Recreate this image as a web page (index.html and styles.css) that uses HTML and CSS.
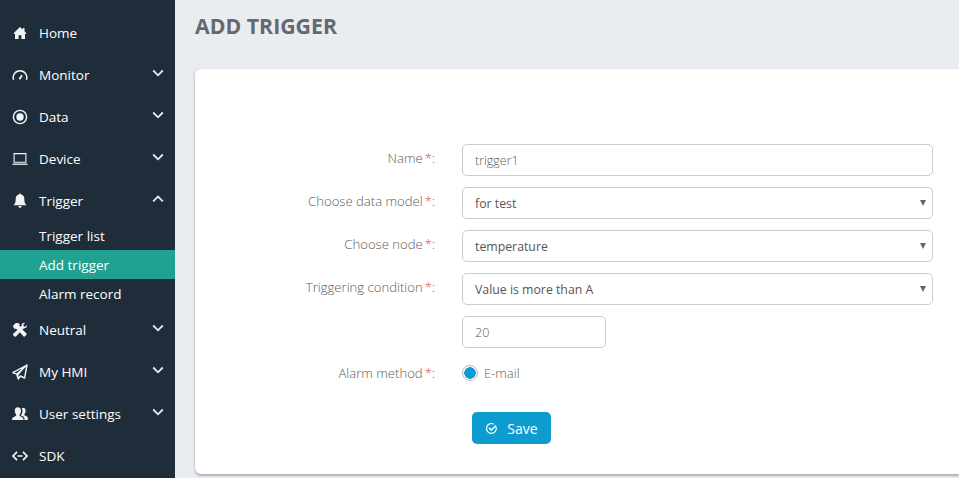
FILE: index.html
```html
<!DOCTYPE html>
<html lang="en">

<head>
  <meta charset="UTF-8">
  <meta name="viewport" content="width=device-width, initial-scale=1.0">
  <title>Add trigger</title>
  <link rel="stylesheet" href="styles.css">
</head>

<body>

  <aside class="sidebar">
    <a class="menu-item" href="#">
      <svg class="menu-icon" viewBox="0 0 16 16"><path fill="currentColor" d="M8 2 1.500 8.200l.8.8.7-.6V14h3.600v-3.800h2.800V14H13V8.400l.7.6.8-.8-2-1.900V3h-1.800v1.600z"/></svg>
      <span>Home</span>
    </a>
    <a class="menu-item" href="#">
      <svg class="menu-icon" viewBox="0 0 16 16"><path fill="none" stroke="currentColor" stroke-width="1.500" d="M1.600 12.800A6.800 6.800 0 1 1 14.400 12.800"/><path fill="none" stroke="currentColor" stroke-width="1.800" d="m7.400 12.300 2.600-4"/></svg>
      <span>Monitor</span>
      <svg class="chevron" viewBox="0 0 12 8"><path d="m1.200 1.500 4.800 4.800 4.800-4.800"/></svg>
    </a>
    <a class="menu-item" href="#">
      <svg class="menu-icon" viewBox="0 0 16 16"><circle cx="8" cy="8" r="6.600" fill="none" stroke="currentColor" stroke-width="1.400"/><circle cx="8" cy="8" r="3.700" fill="currentColor"/></svg>
      <span>Data</span>
      <svg class="chevron" viewBox="0 0 12 8"><path d="m1.200 1.500 4.800 4.800 4.800-4.800"/></svg>
    </a>
    <a class="menu-item" href="#">
      <svg class="menu-icon" viewBox="0 0 16 16"><path fill="none" stroke="currentColor" stroke-width="1.100" d="M2.100 2.600h11.800v8.600H2.100z"/><path fill="none" stroke="currentColor" stroke-width="1.300" d="M.5 13.200h15"/></svg>
      <span>Device</span>
      <svg class="chevron" viewBox="0 0 12 8"><path d="m1.200 1.500 4.800 4.800 4.800-4.800"/></svg>
    </a>
    <a class="menu-item" href="#">
      <svg class="menu-icon" viewBox="0 0 16 16"><path fill="currentColor" d="M8 .5c.6 0 1 .4 1 1 2.300.5 3.300 2.200 3.300 4.300 0 3.200.6 5 2.200 6.400H1.500c1.600-1.400 2.200-3.200 2.200-6.400C3.700 3.700 4.700 2 7 1.500c0-.6.400-1 1-1zM6.400 13h3.200c0 1-.7 1.800-1.600 1.800S6.400 14 6.400 13z"/></svg>
      <span>Trigger</span>
      <svg class="chevron" viewBox="0 0 12 8"><path d="m1.200 6.300 4.800-4.800 4.800 4.800"/></svg>
    </a>
    <div class="submenu">
      <a class="submenu-item" href="#">Trigger list</a>
      <a class="submenu-item active" href="#">Add trigger</a>
      <a class="submenu-item" href="#">Alarm record</a>
    </div>
    <a class="menu-item" href="#">
      <svg class="menu-icon" viewBox="0 0 16 16"><path fill="currentColor" d="M.8 4.200 3.200 1.400c1.600-.6 3.400-.4 4.700.8l-.8 1 1.500 1.500 1-1c-.2-1.500.9-2.900 2.700-2.900l.7.100-1.700 1.900.4 1.500 1.500.4 1.800-1.700c.3 2-1.200 3.600-3 3.200L10.500 7.500l4 4.100c.5.600 0 1.200-.9 2.100-.9.900-1.500 1.300-2 .8L7.800 10.300l-3.500 3.900c-.6.700-1.500.5-2.400-.3-.9-.9-1.100-1.800-.5-2.400L5.400 8 3.800 6.400 2.800 7.200z"/></svg>
      <span>Neutral</span>
      <svg class="chevron" viewBox="0 0 12 8"><path d="m1.200 1.500 4.800 4.800 4.800-4.800"/></svg>
    </a>
    <a class="menu-item" href="#">
      <svg class="menu-icon" viewBox="0 0 16 16"><path fill="none" stroke="currentColor" stroke-width="1.400" stroke-linejoin="round" d="M15 1 .8 8.600l3.900 1.600zM15 1l-2.400 13-4.200-2-2.100 3-1.600-4.800"/><path fill="currentColor" d="M13.800 2 4.900 10.200l1.400 4.600.3-3.800z"/></svg>
      <span>My HMI</span>
      <svg class="chevron" viewBox="0 0 12 8"><path d="m1.200 1.500 4.800 4.800 4.800-4.800"/></svg>
    </a>
    <a class="menu-item" href="#">
      <svg class="menu-icon" viewBox="0 0 16 16"><path fill="currentColor" d="M5.800 1.200c2 0 3.200 1.500 3.200 3.500S8 8.300 7.500 8.800c0 .9.300 1.200 1.300 1.600 1.300.5 2.600 1.100 2.600 2.200V14H.2v-1.400c0-1.100 1.300-1.700 2.600-2.200 1-.4 1.500-.7 1.500-1.600-.4-.5-1.500-2.100-1.500-4.100s1-3.500 3-3.500zM11 1.800c1.700 0 2.600 1.300 2.600 3s-.9 3.200-1.300 3.600c0 .8.300 1 1.100 1.300 1.100.5 2.400 1 2.400 2V14h-3.400v-1.800c0-1.100-1.100-1.800-2.800-2.500-.4-.2-.6-.4-.6-.8.700-.8 1.500-2.200 1.500-3.700 0-1-.2-2-.7-2.900.5-.3 1-.5 1.600-.5z"/></svg>
      <span>User settings</span>
      <svg class="chevron" viewBox="0 0 12 8"><path d="m1.200 1.500 4.800 4.800 4.800-4.800"/></svg>
    </a>
    <a class="menu-item" href="#">
      <svg class="menu-icon" viewBox="0 0 16 16"><path fill="none" stroke="currentColor" stroke-width="1.800" d="M5 3.800.9 8 5 12.200M11 3.800 15.100 8 11 12.200"/><path fill="none" stroke="currentColor" stroke-width="1.500" d="M5.500 8h5"/></svg>
      <span>SDK</span>
    </a>
  </aside>

  <main class="main">
    <h1 class="page-title">ADD TRIGGER</h1>

    <form class="card">
      <label class="form-label">Name<em>*</em>:</label>
      <input class="form-input" type="text" value="trigger1">

      <label class="form-label">Choose data model<em>*</em>:</label>
      <div class="select-wrap">
        <select class="form-input form-select"><option>for test</option></select>
      </div>

      <label class="form-label">Choose node<em>*</em>:</label>
      <div class="select-wrap">
        <select class="form-input form-select"><option>temperature</option></select>
      </div>

      <label class="form-label">Triggering condition<em>*</em>:</label>
      <div class="select-wrap">
        <select class="form-input form-select"><option>Value is more than A</option></select>
      </div>

      <span></span>
      <input class="form-input input-small" type="text" value="20">

      <label class="form-label label-radio">Alarm method<em>*</em>:</label>
      <label class="radio-line">
        <input class="radio" type="radio" name="method" checked>
        <span>E-mail</span>
      </label>

      <span></span>
      <button class="save-btn" type="button">
        <svg class="save-icon" viewBox="0 0 14 14"><path fill="none" stroke="currentColor" stroke-width="1.300" d="M11.900 5.200A5.300 5.300 0 1 1 9.600 2.400"/><path fill="none" stroke="currentColor" stroke-width="1.500" d="m4.300 6.300 2.500 2.400 5.200-5"/></svg>
        Save
      </button>
    </form>
  </main>

</body>

</html>
```

FILE: styles.css
```css
html,
body {
  height: 100%;
}

body {
  margin: 0;
  display: flex;
  overflow: hidden;
  background: #e9ecf1;
  font-family: "Open Sans", sans-serif;
}

.sidebar {
  flex: 0 0 175px;
  padding-top: 12px;
  background: #1f2d3a;
  box-sizing: border-box;
}

.menu-item {
  display: flex;
  align-items: center;
  height: 42px;
  padding: 0 11px 0 12px;
  color: #fff;
  font-size: 13.5px;
  text-decoration: none;
}

.menu-item span {
  flex: 1;
  margin-left: 11px;
}

.menu-icon {
  width: 16px;
  height: 16px;
  flex: none;
  color: #f1f3f5;
}

.chevron {
  width: 12px;
  height: 8px;
  margin-top: -5px;
  fill: none;
  stroke: #e8ebee;
  stroke-width: 1.800;
}

.submenu {
  margin-top: -1px;
  padding-bottom: 1px;
}

.submenu-item {
  display: block;
  height: 29px;
  padding-left: 39px;
  color: #fff;
  font-size: 13.5px;
  line-height: 31px;
  text-decoration: none;
}

.submenu-item.active {
  background: #20a192;
}

.main {
  flex: 1;
  min-width: 0;
  padding-left: 20px;
}

.page-title {
  margin: 0;
  height: 69px;
  color: #65686d;
  font-size: 21.300px;
  font-weight: 700;
  line-height: 52px;
}

.card {
  display: grid;
  grid-template-columns: 240px 471px;
  grid-template-rows: repeat(5, 32px) 28px 46px;
  column-gap: 27px;
  row-gap: 11px;
  align-items: center;
  height: 405px;
  padding-top: 75px;
  box-sizing: border-box;
  background: #fff;
  border-radius: 6px 0 0 6px;
  box-shadow: 0 2px 2px #b0b2b5, -1px 0 2px #d6d9de;
}

.form-label {
  margin-top: -5px;
  color: #5c5c5c;
  font-size: 13.100px;
  font-weight: 300;
  text-align: right;
}

.form-label em {
  margin-left: 2px;
  color: #d9534f;
  font-style: normal;
}

.form-input {
  width: 100%;
  height: 32px;
  padding: 0 12px;
  box-sizing: border-box;
  border: 1px solid #ccc;
  border-radius: 5px;
  background: #fff;
  color: #5c5c5c;
  font-family: "Open Sans", sans-serif;
  font-size: 12.500px;
  font-weight: 300;
  outline: none;
}

.select-wrap {
  position: relative;
}

.select-wrap::after {
  content: "";
  position: absolute;
  top: 13px;
  right: 7px;
  border-top: 6px solid #666;
  border-left: 3px solid transparent;
  border-right: 3px solid transparent;
}

.form-select {
  appearance: none;
  color: #555;
  font-size: 12.300px;
  font-weight: 400;
}

.input-small {
  width: 144px;
}

.label-radio {
  margin-top: 0;
}

.radio-line {
  display: flex;
  align-items: center;
  color: #5c5c5c;
  font-size: 13px;
  font-weight: 300;
}

.radio {
  appearance: none;
  width: 16px;
  height: 16px;
  margin: 0 6px 0 0;
  border: 1px solid #bbb;
  border-radius: 50%;
  background: radial-gradient(circle, #0b9ad1 0 5.500px, #fff 6px);
}

.save-btn {
  display: flex;
  align-items: center;
  justify-content: center;
  align-self: end;
  width: 79px;
  height: 32px;
  margin: 0 0 0 10px;
  padding: 0;
  border: none;
  border-radius: 5px;
  background: #0d9ccf;
  color: #fff;
  font-family: "Open Sans", sans-serif;
  font-size: 14px;
  font-weight: 500;
}

.save-icon {
  width: 13px;
  height: 13px;
  margin-right: 9px;
}
```
